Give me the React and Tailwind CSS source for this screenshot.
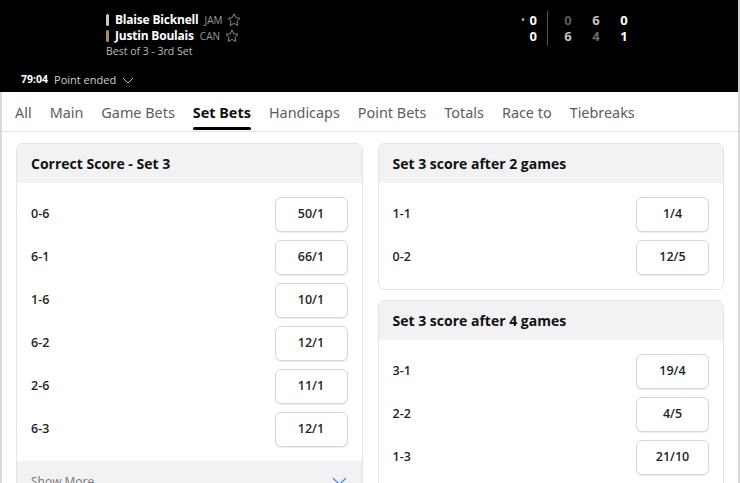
import React from "react";

const Star = () => (
  <svg width="16" height="16" viewBox="0 0 24 24" fill="none" stroke="#8a8a8a" strokeWidth="1.5" strokeLinejoin="round">
    <path d="M12 2.8l2.8 5.8 6.3.9-4.6 4.4 1.1 6.3L12 17.2l-5.6 3 1.1-6.3-4.6-4.4 6.3-.9z" />
  </svg>
);

const Chevron = ({ color = "#cfcfcf", w = 12 }) => (
  <svg width={w} height={w * 0.6} viewBox="0 0 20 12" fill="none" stroke={color} strokeWidth="1.6" strokeLinecap="round" strokeLinejoin="round">
    <path d="M2 2l8 8 8-8" />
  </svg>
);

const Row = ({ label, odds }) => (
  <div className="flex items-center justify-between h-[35px]">
    <span className="text-[12.5px] font-semibold text-[#1f1f1f]">{label}</span>
    <button className="w-[73px] h-[35px] rounded-[6px] border border-[#d6d6d6] bg-white shadow-[0_1px_1px_rgba(0,0,0,0.08)] text-[12.5px] font-semibold text-[#1f1f1f]">
      {odds}
    </button>
  </div>
);

const Card = ({ title, rows, showMore }) => (
  <div className="rounded-[7px] border border-[#e3e3e3] bg-white overflow-hidden">
    <div className="h-[39px] bg-[#f2f2f4] flex items-center px-[14px]">
      <span className="text-[14px] font-bold text-[#111]">{title}</span>
    </div>
    <div className="px-[14px] pt-[14px] pb-[14px] flex flex-col gap-[8px]">
      {rows.map((r) => (
        <Row key={r[0]} label={r[0]} odds={r[1]} />
      ))}
    </div>
    {showMore && (
      <div className="h-[40px] bg-[#f2f2f4] flex items-start justify-between px-[14px] pt-[12px]">
        <span className="text-[12px] text-[#777]">Show More</span>
        <span className="pt-[4px] pr-[1px]"><Chevron color="#3b82f6" w={15} /></span>
      </div>
    )}
  </div>
);

export default function App() {
  const tabs = ["All", "Main", "Game Bets", "Set Bets", "Handicaps", "Point Bets", "Totals", "Race to", "Tiebreaks"];
  return (
    <div className="w-[740px] h-[483px] overflow-hidden bg-white" style={{ fontFamily: '"Open Sans", "Noto Sans", sans-serif' }}>
      <div className="h-[92px] bg-black relative border-r-2 border-[#cfcfcf]">
        <div className="absolute left-[106px] top-[12px] flex flex-col">
          <div className="flex items-center h-[16px]">
            <span className="w-[3px] h-[12px] rounded-sm bg-[#c9c9c9] mr-[6px]" />
            <span className="text-[12px] font-bold text-white tracking-[-0.2px]">Blaise Bicknell</span>
            <span className="text-[10px] text-[#9a9a9a] ml-[6px] mr-[4px]">JAM</span>
            <Star />
          </div>
          <div className="flex items-center h-[16px]">
            <span className="w-[3px] h-[12px] rounded-sm bg-[#b48a5c] mr-[6px]" />
            <span className="text-[12px] font-bold text-white tracking-[-0.2px]">Justin Boulais</span>
            <span className="text-[10px] text-[#9a9a9a] ml-[6px] mr-[4px]">CAN</span>
            <Star />
          </div>
          <span className="text-[10.5px] leading-[14px] text-[#bdbdbd]">Best of 3 - 3rd Set</span>
        </div>
        <div className="absolute left-[505px] top-[12px] flex items-stretch">
          <div className="flex flex-col items-end w-[32px] pr-[0px]">
            <div className="flex items-center h-[16px] leading-[16px] text-[13px] font-bold text-white"><span className="text-[8px] text-[#bbb] mr-[5px]">•</span>0</div>
            <div className="flex items-center h-[16px] leading-[16px] text-[13px] font-bold text-white">0</div>
          </div>
          <div className="w-[10px]" />
          <div className="w-px bg-[#555] -mt-[1px] mb-[-2px]" />
          <div className="grid grid-cols-3 w-[84px] ml-[6px] text-[13px] font-bold text-center leading-[16px]">
            <span className="h-[16px] text-[#5a5a5a]">0</span>
            <span className="h-[16px] text-[#c4c4c4]">6</span>
            <span className="h-[16px] text-white">0</span>
            <span className="h-[16px] text-[#c4c4c4]">6</span>
            <span className="h-[16px] text-[#6a6a6a]">4</span>
            <span className="h-[16px] text-white">1</span>
          </div>
        </div>
        <div className="absolute left-[21px] top-[72px] flex items-center">
          <span className="text-[10.5px] font-bold text-white">79:04</span>
          <span className="text-[11px] text-[#d0d0d0] ml-[6px] mr-[6px]">Point ended</span>
          <Chevron />
        </div>
      </div>
      <div className="border-x-2 border-[#d9d9d9] h-[391px]">
        <div className="h-[40px] border-b border-[#e2e2e2] flex items-stretch pl-[13px] gap-[18px]" style={{ fontFamily: '"Noto Sans", sans-serif' }}>
          {tabs.map((t) => (
            <div key={t} className="relative flex items-center pt-[2px]">
              <span className={t === "Set Bets" ? "text-[14.4px] font-bold text-[#111]" : "text-[14.4px] text-[#5c5c5c]"}>{t}</span>
              {t === "Set Bets" && <span className="absolute left-0 right-0 bottom-[1px] h-[3px] rounded-full bg-black" />}
            </div>
          ))}
        </div>
        <div className="grid grid-cols-2 gap-[15px] px-[14px] pt-[11px]">
          <div>
            <Card
              title="Correct Score - Set 3"
              rows={[["0-6", "50/1"], ["6-1", "66/1"], ["1-6", "10/1"], ["6-2", "12/1"], ["2-6", "11/1"], ["6-3", "12/1"]]}
              showMore
            />
          </div>
          <div className="flex flex-col gap-[10px]">
            <Card title="Set 3 score after 2 games" rows={[["1-1", "1/4"], ["0-2", "12/5"]]} />
            <Card title="Set 3 score after 4 games" rows={[["3-1", "19/4"], ["2-2", "4/5"], ["1-3", "21/10"]]} />
          </div>
        </div>
      </div>
    </div>
  );
}
